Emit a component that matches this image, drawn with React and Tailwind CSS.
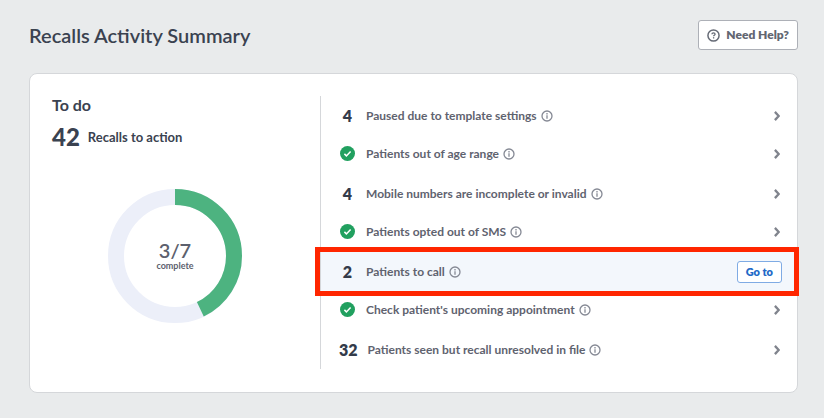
const ITEMS = [
  { count: 4, label: 'Paused due to template settings' },
  { count: 0, label: 'Patients out of age range' },
  { count: 4, label: 'Mobile numbers are incomplete or invalid' },
  { count: 0, label: 'Patients opted out of SMS' },
  { count: 2, label: 'Patients to call', active: true },
  { count: 0, label: "Check patient's upcoming appointment" },
  { count: 32, label: 'Patients seen but recall unresolved in file' },
];

const InfoIcon = () => (
  <svg viewBox="0 0 12 12" className="ml-1 mt-px size-3 shrink-0" fill="none" stroke="#858994" aria-hidden="true">
    <circle cx="6" cy="6" r="5" strokeWidth="1.3" />
    <path d="M6 5.3v3.4" strokeWidth="1.3" />
    <path d="M6 3.1v1.3" strokeWidth="1.3" />
  </svg>
);

const HelpIcon = () => (
  <svg viewBox="0 0 14 14" className="size-[13px]" fill="none" stroke="#666b76" aria-hidden="true">
    <circle cx="7" cy="7" r="6" strokeWidth="1.6" />
    <path d="M5.3 5.7c0-1 .7-1.6 1.7-1.6s1.7.6 1.7 1.5c0 1.1-1.6 1.2-1.6 2.3" strokeWidth="1.4" />
    <path d="M7.1 8.8v1.4" strokeWidth="1.4" />
  </svg>
);

const DoneIcon = () => (
  <svg viewBox="0 0 15 15" className="size-[15px]" role="img" aria-label="Done">
    <circle cx="7.5" cy="7.5" r="7.5" fill="#21a05f" />
    <path d="M4.4 7.9l2 2 4.2-4.5" fill="none" stroke="#fff" strokeWidth="1.5" />
  </svg>
);

const ChevronIcon = () => (
  <svg viewBox="0 0 6 10" className="h-[10px] w-[6px]" fill="none" stroke="#80848d" aria-hidden="true">
    <path d="M0.9 0.9L4.7 5L0.9 9.1" strokeWidth="2.3" />
  </svg>
);

const ProgressRing = ({ done, total }) => {
  const radius = 59;
  const length = 2 * Math.PI * radius;

  return (
    <div className="grid place-items-center">
      <svg viewBox="0 0 134 134" className="col-start-1 row-start-1 size-[134px] -rotate-90" fill="none" strokeWidth="16" aria-hidden="true">
        <circle cx="67" cy="67" r={radius} stroke="#eceff9" />
        <circle cx="67" cy="67" r={radius} stroke="#4db380" strokeDasharray={`${(length * done) / total} ${length}`} />
      </svg>
      <div className="col-start-1 row-start-1 text-center text-[#5c606d]">
        <div className="text-xl leading-5 font-semibold">{done}/{total}</div>
        <div className="text-[9px] leading-3 font-bold">complete</div>
      </div>
    </div>
  );
};

const RecallRow = ({ count, label, active }) => (
  <li className={`relative flex h-[39px] items-center pr-[15px] pl-[18px] ${active ? 'bg-[#f3f7fc]' : count > 0 ? '' : 'pb-0.5'}`}>
    <span className="flex min-w-[17px] justify-center text-base leading-5 font-extrabold text-[#333b4a]">
      {count > 0 ? count : <DoneIcon />}
    </span>
    <span className="ml-[10px] text-xs leading-4 font-bold text-[#5f636f]">{label}</span>
    <InfoIcon />
    {active ? (
      <button className="ml-auto h-[22px] rounded-[3px] border border-[#7fabe4] bg-white px-2 text-[11px] leading-4 font-extrabold text-[#2269c7]">
        Go to
      </button>
    ) : (
      <button className="mr-0.5 ml-auto" aria-label={`Open ${label}`}>
        <ChevronIcon />
      </button>
    )}
    {active && <div className="pointer-events-none absolute -inset-y-[5px] -right-[2px] -left-[6px] border-[5px] border-[#ff2600]" />}
  </li>
);

export default function App() {
  return (
    <main className="min-h-screen bg-[#e9ebec] pt-5 pr-[26px] pb-[25px] pl-[29px] font-['Lato',sans-serif] text-[#3a4250]">
      <header className="flex items-center justify-between">
        <h1 className="text-xl leading-6 font-semibold">Recalls Activity Summary</h1>
        <button className="flex h-[30px] items-center gap-[6px] rounded-[3px] border border-[#adb0b7] bg-white px-2 text-xs font-extrabold text-[#626671]">
          <HelpIcon />
          Need Help?
        </button>
      </header>

      <section className="mt-[23px] flex rounded-lg border border-[#d5d7da] bg-white pt-[22px] pb-[23px]">
        <div className="w-[290px] shrink-0 px-[22px]">
          <h2 className="text-base leading-[18px] font-bold">To do</h2>
          <p className="mt-[9px] flex items-center gap-2">
            <span className="text-2xl leading-7 font-black">42</span>
            <span className="text-[13px] leading-5 font-bold">Recalls to action</span>
          </p>
          <div className="mt-[38px]">
            <ProgressRing done={3} total={7} />
          </div>
        </div>
        <ul className="min-w-0 flex-1 border-l border-[#d5d7da]">
          {ITEMS.map((item) => (
            <RecallRow key={item.label} {...item} />
          ))}
        </ul>
      </section>
    </main>
  );
}
